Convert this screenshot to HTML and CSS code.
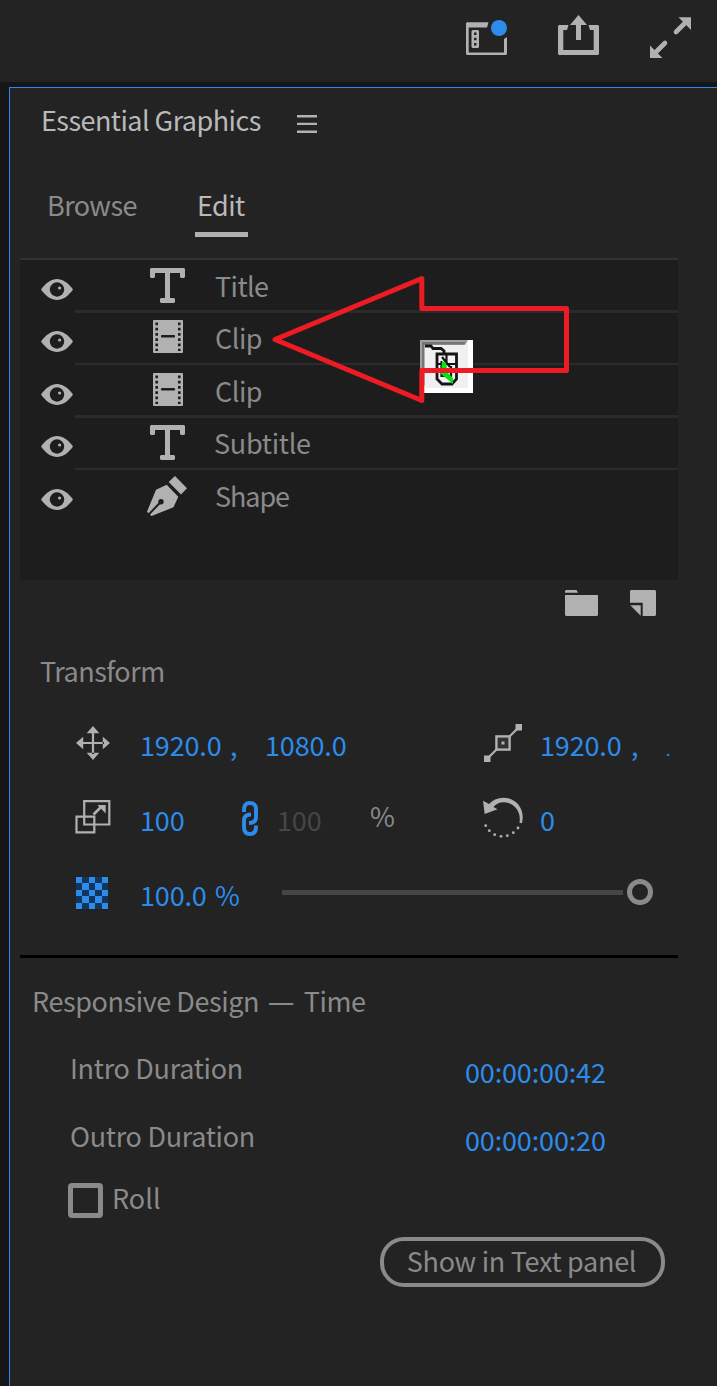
FILE: index.html
```
<!DOCTYPE html>
<html lang="en">
<head>
<meta charset="utf-8">
<title>Essential Graphics</title>
<link rel="stylesheet" href="styles.css">
</head>
<body>
<svg class="defs" width="0" height="0">
  <symbol id="eye" viewBox="0 0 32 21"><path fill="#b1b1b1" d="M0 10.500C5 3.500 10.500 0 16 0s11 3.500 16 10.500C27 17.500 21.500 21 16 21S5 17.500 0 10.500z"/><circle cx="16" cy="10.500" r="7.200" fill="#1d1d1d"/><circle cx="18.600" cy="9" r="1.600" fill="#b1b1b1"/></symbol>
  <symbol id="type" viewBox="0 0 35 35"><path fill="#b1b1b1" d="M1 0H34L35 1V9L34 10H31L30 9V5H20V30H24L25 31V34L24 35H11L10 34V31L11 30H15V5H5V9L4 10H1L0 9V1z"/></symbol>
  <symbol id="film" viewBox="0 0 30 33"><rect width="30" height="33" rx="1" fill="#b1b1b1"/><path stroke="#1d1d1d" stroke-width="2.600" stroke-dasharray="2.600 2.650" d="M3.700 2.600V31M26.300 2.600V31"/><rect x="8" y="15" width="14" height="2.600" rx=".8" fill="#1d1d1d"/></symbol>
</svg>

<header class="topbar">
  <svg class="top-icon workspace" width="42" height="36" viewBox="466 20 42 36"><path fill="#b1b1b1" d="M467 22.300H488.500L487 27.500H468.700V52.500H504V39L507 37V54L506 55H467L466 54V23.300z"/><path fill="#b1b1b1" fill-rule="evenodd" d="M472.500 30H478L479 31V47L478 48H472.500L471.500 47V31zM474 32.500V35H476.500V32.500zM474 37.800V40.300H476.500V37.800zM474 43V45.500H476.500V43z"/><circle cx="499" cy="28" r="8" fill="#2d8ceb"/></svg>
  <svg class="top-icon share" width="41" height="41" viewBox="558 15 41 41"><path fill="#b1b1b1" d="M559 25H568.500L567 30H563.300V50H593.700V30H590L588.500 25H598L599 26V54L598 55H559L558 54V26zM578.500 15L587 25H581V40H576V25H570z"/></svg>
  <svg class="top-icon expand" width="42" height="42" viewBox="650 17 42 42"><path fill="#b1b1b1" d="M678.500 17.300H691V30zM650 45.500V58H662.500z"/><path stroke="#b1b1b1" stroke-width="4.600" stroke-linecap="round" d="M676 32L686.500 21.500M665 43L654.500 53.500"/></svg>
</header>

<main class="panel">
  <div class="panel-head">
    <h1 class="panel-title">Essential Graphics</h1>
    <svg class="menu" width="20" height="18"><path fill="#b1b1b1" d="M0 0H20V2.400H0zM0 7.700H20V10.100H0zM0 15.500H20V17.900H0z"/></svg>
  </div>
  <nav class="tabs">
    <span class="tab browse">Browse</span>
    <span class="tab edit">Edit</span>
  </nav>

  <section class="layers">
    <div class="layer"><svg class="eye"><use href="#eye"/></svg><div class="entry thick"><span class="kind"><svg width="35" height="35"><use href="#type"/></svg></span><span class="name title">Title</span></div></div>
    <div class="layer"><svg class="eye"><use href="#eye"/></svg><div class="entry"><span class="kind film"><svg width="30" height="33"><use href="#film"/></svg></span><span class="name clip">Clip</span></div></div>
    <div class="layer"><svg class="eye"><use href="#eye"/></svg><div class="entry thick"><span class="kind film"><svg width="30" height="33"><use href="#film"/></svg></span><span class="name clip">Clip</span></div></div>
    <div class="layer"><svg class="eye"><use href="#eye"/></svg><div class="entry"><span class="kind"><svg width="35" height="35"><use href="#type"/></svg></span><span class="name subtitle">Subtitle</span></div></div>
    <div class="layer"><svg class="eye"><use href="#eye"/></svg><div class="entry last"><span class="kind pen"><svg width="40" height="40" viewBox="0 0 40 40"><path fill="#b1b1b1" d="M28 0L40 12.300 34 18.500 21.700 6zM19.700 8.700L31.300 20.700 26.500 31.300 4.500 40 0 35.700 9 13.700z"/><path stroke="#1d1d1d" stroke-width="2" d="M1 39.200L14 25.700"/><circle cx="14" cy="25.700" r="2.700" fill="#1d1d1d"/></svg></span><span class="name shape">Shape</span></div></div>
  </section>

  <div class="layer-actions">
    <svg width="33" height="26"><path fill="#b1b1b1" d="M1 0H11.500L13 2.700H0V1zM0 5H33V25L32 26H1L0 25z"/></svg>
    <svg width="26" height="26"><path fill="#b1b1b1" d="M1 0H25L26 1V25L25 26H12.700V12.700H0V1zM.3 15.300H10.700V25.700z"/></svg>
  </div>

  <section class="transform">
    <h2 class="transform-title">Transform</h2>
    <div class="prop-row">
      <svg class="icon-move" width="34" height="34"><path fill="#b1b1b1" d="M17 0L23.300 7.200H10.700zM17 34L23.300 26.800H10.700zM0 17L7.200 10.700V23.300zM34 17L26.800 10.700V23.300zM15.900 6H18.100V28H15.900zM6 15.900H28V18.100H6z"/></svg>
      <span class="value v1">1920.0</span><span class="value comma">,</span><span class="value v2">1080.0</span>
      <svg class="icon-anchor" width="38" height="38"><path stroke="#b1b1b1" stroke-width="2.200" d="M3 35L35 3"/><rect x="12.400" y="12.400" width="13.200" height="13.200" fill="#323232" stroke="#b1b1b1" stroke-width="2.400"/><path fill="#b1b1b1" d="M0 31.600H6.500V38H0zM31.500 0H38V6.500H31.500zM17.500 17.500H20.500V20.500H17.500z"/></svg>
      <span class="value v3">1920.0</span><span class="value comma">,</span><span class="value stub">.</span>
    </div>
    <div class="prop-row">
      <svg class="icon-scale" width="36" height="34"><g fill="none" stroke="#b1b1b1" stroke-width="2.200"><path d="M9.200 1.200H34.300V24.500H9.200zM1.500 16.700H19.300V32.300H1.500z"/><path stroke-width="2.600" d="M18.500 14.500L26 7"/></g><path fill="#b1b1b1" d="M22.500 5H30.700V13.500z"/></svg>
      <span class="value v1">100</span>
      <svg class="icon-link" width="16" height="35"><path fill="none" stroke="#2d8ceb" stroke-width="3.900" d="M2 11V9C2 4.500 4 2 8 2s6 2.500 6 6v8c0 4-2.500 6-7 6M14 24.500V26c0 4.500-2 7-6 7s-6-2.500-6-7v-6.500c0-4 2.500-6 7-6"/></svg>
      <span class="value dim">100</span>
      <span class="unit">%</span>
      <svg class="icon-rotate" width="41" height="41"><path fill="#b1b1b1" d="M0 3.700L6 7C10 2.800 15 .7 20.300.7 31 .7 39.700 9 39.700 19.700Q39.700 23 39 26.300L36.500 25.700C38.500 13 30 5.300 20.300 5.300 16.500 5.300 13 7 10.500 10L14.500 12.300 1.700 17z"/><g fill="#b1b1b1"><circle cx="2.700" cy="28.700" r="1.400"/><circle cx="6.300" cy="33.700" r="1.400"/><circle cx="11.700" cy="37.700" r="1.400"/><circle cx="18" cy="39.300" r="1.400"/><circle cx="24.300" cy="38.700" r="1.400"/><circle cx="30.300" cy="35.700" r="1.400"/><circle cx="35" cy="31" r="1.400"/></g></svg>
      <span class="value v4">0</span>
    </div>
    <div class="prop-row">
      <svg class="icon-opacity" width="32" height="32" viewBox="0 0 5 5" shape-rendering="crispEdges"><path fill="#12355b" d="M0 0H5V5H0z"/><path fill="#2d8ceb" d="M0 0h1v1H0zM2 0h1v1H2zM4 0h1v1H4zM1 1h1v1H1zM3 1h1v1H3zM0 2h1v1H0zM2 2h1v1H2zM4 2h1v1H4zM1 3h1v1H1zM3 3h1v1H3zM0 4h1v1H0zM2 4h1v1H2zM4 4h1v1H4z"/></svg>
      <span class="value opacity">100.0 %</span>
      <div class="slider"><div class="track"></div><div class="knob"></div></div>
    </div>
  </section>

  <section class="responsive">
    <h2 class="responsive-title">Responsive Design <span class="dash">—</span> Time</h2>
    <div class="duration"><span class="label">Intro Duration</span><span class="value time">00:00:00:42</span></div>
    <div class="duration"><span class="label">Outro Duration</span><span class="value time">00:00:00:20</span></div>
    <div class="roll"><span class="checkbox"></span><span class="roll-label">Roll</span></div>
    <div class="footer"><button class="text-button" type="button">Show in Text panel</button></div>
  </section>
</main>

<svg class="annotation" width="300" height="132" viewBox="270 274 300 132">
  <path fill="#f0f0f0" d="M420 340H473V393H420z"/>
  <path fill="#fff" d="M468 340H473V393H424V388H468z"/>
  <path fill="#a0a0a0" d="M420 340H468L465 345H424V386L420 391z"/>
  <path fill="#757575" d="M422 342H466L464 344.500H424.500V385H422z"/>
  <g fill="none" stroke="#151515" stroke-width="2.800">
    <path d="M425 346H431L433 348.500H441L444 351V354"/>
    <path fill="#f4f4f4" d="M437 354H456.500V379L452 384H442L437 379z"/>
    <path stroke-width="2.200" d="M446.500 354V364M437 364H457M442 357L450 367M441.500 361V376H451V366"/>
  </g>
  <path fill="#00e514" d="M442 361L446 363 448 373 453 378V384L447 379 441 374z"/>
  <path fill="none" stroke="#ed1c24" stroke-width="5" stroke-linejoin="round" d="M275 339.500L421.800 278.500V308.500H566.500V370.500H421.800V400.500z"/>
</svg>
</body>
</html>
```
FILE: styles.css
```
* { box-sizing: border-box; }

body {
  margin: 0;
  width: 717px;
  height: 1386px;
  overflow: hidden;
  position: relative;
  background: #161616;
  color: #8a8a8a;
  font: 27px/40px "Noto Sans CJK SC", "Noto Sans", sans-serif;
  letter-spacing: -0.3px;
  white-space: nowrap;
}

svg { display: block; flex: none; }
.defs { position: absolute; }
h1, h2 { margin: 0; font: inherit; }

.topbar {
  display: flex;
  align-items: flex-start;
  height: 82px;
  padding-left: 466px;
  background: #232323;
}
.workspace { margin-top: 20px; }
.share { margin: 15px 0 0 50px; }
.expand { margin: 17px 0 0 51px; }

.panel {
  height: 1299px;
  margin: 5px 0 0 9px;
  background: #232323;
  border: solid #2d8ceb;
  border-width: 1px 0 0 1px;
}

.panel-head { display: flex; align-items: center; height: 62px; padding-left: 31px; color: #b9b9b9; }
.panel-title { width: 256px; padding-top: 2px; letter-spacing: -0.55px; }
.menu { margin-top: 10px; }

.tabs { display: flex; align-items: flex-start; height: 108px; padding: 35px 0 0 37px; letter-spacing: -0.6px; }
.tab { height: 52px; }
.browse { width: 148px; }
.edit { width: 53px; padding-left: 2px; color: #b9b9b9; border-bottom: 5px solid #b1b1b1; }

.layers { width: 658px; height: 322px; margin-left: 10px; background: #1d1d1d; border-top: 2px solid #323232; }
.layer { display: flex; height: 53px; padding-left: 21px; }
.layer:nth-child(odd) { height: 52px; }
.eye { width: 32px; height: 21px; margin: 19px 2px 0 0; }
.entry { flex: 1; display: flex; align-items: center; height: 53px; border-bottom: 2px solid #2b2b2b; }
.entry.thick { border-bottom-width: 3px; }
.entry.last { border-color: transparent; }
.kind { width: 140px; padding-left: 75px; }
.kind.film { padding-left: 78px; margin-top: -2px; }
.kind.pen { padding-left: 72px; }
.name { padding-top: 1px; }
.title { padding-top: 2px; letter-spacing: -0.6px; }
.clip { letter-spacing: -0.5px; }
.shape { letter-spacing: -1.1px; }
.subtitle { margin-left: -1px; }

.layer-actions { display: flex; gap: 32px; height: 71px; padding: 10px 0 0 555px; }

.transform { width: 658px; height: 307px; margin-left: 10px; border-bottom: 3px solid #000; }
.transform-title { padding-left: 20px; margin-bottom: 16px; letter-spacing: -0.5px; }
.prop-row { display: flex; align-items: center; height: 75px; }
.value { color: #2d8ceb; letter-spacing: -0.15px; }
.prop-row .value { flex: none; }
.icon-move { margin: -3px 30px 0 56px; }
.v1 { width: 90px; }
.comma { width: 35px; }
.v2 { width: 219px; }
.icon-anchor { margin: -3px 18px 0 0; }
.v3 { width: 91px; }
.stub { width: 4px; padding-top: 8px; font-size: 16px; line-height: 30px; }
.icon-scale { margin: -6px 29px 0 55px; }
.icon-link { margin: -2px 19px 0 12px; }
.dim { width: 93px; color: #464646; }
.unit { width: 113px; margin-top: -8px; }
.icon-rotate { margin: -4px 16px 0 0; }
.icon-opacity { margin: -4px 32px 0 56px; }
.opacity { width: 142px; word-spacing: 2.5px; }
.slider { display: flex; align-items: center; gap: 4px; margin-top: -5px; }
.track { width: 341px; height: 5px; background: #464646; }
.knob { width: 26px; height: 26px; border: 5px solid #8a8a8a; border-radius: 50%; }

.responsive { padding-top: 23px; }
.responsive-title { height: 60px; padding-left: 22px; letter-spacing: -0.43px; }
.dash { margin: 0 4px 0 3px; font-size: 30px; line-height: 1; }
.duration { display: flex; align-items: center; height: 67.5px; padding-left: 60px; }
.label { width: 395px; margin-top: -13px; }
.time { margin-top: -5px; }
.roll { display: flex; align-items: center; height: 48px; padding-left: 58px; }
.checkbox { width: 35px; height: 35px; margin-right: 9px; border: 5px solid #8a8a8a; border-radius: 4px; }
.roll-label { margin-top: -4px; letter-spacing: 0; }
.footer { padding: 13px 0 0 370px; }
.text-button {
  width: 285px;
  height: 50px;
  padding: 0 2px 4px 0;
  background: none;
  border: 4px solid #8a8a8a;
  border-radius: 24px;
  color: inherit;
  font: inherit;
  letter-spacing: -0.3px;
  text-align: center;
}

/* Arrow callout floating over the layer list */
.annotation { position: absolute; left: 270px; top: 274px; }
```
